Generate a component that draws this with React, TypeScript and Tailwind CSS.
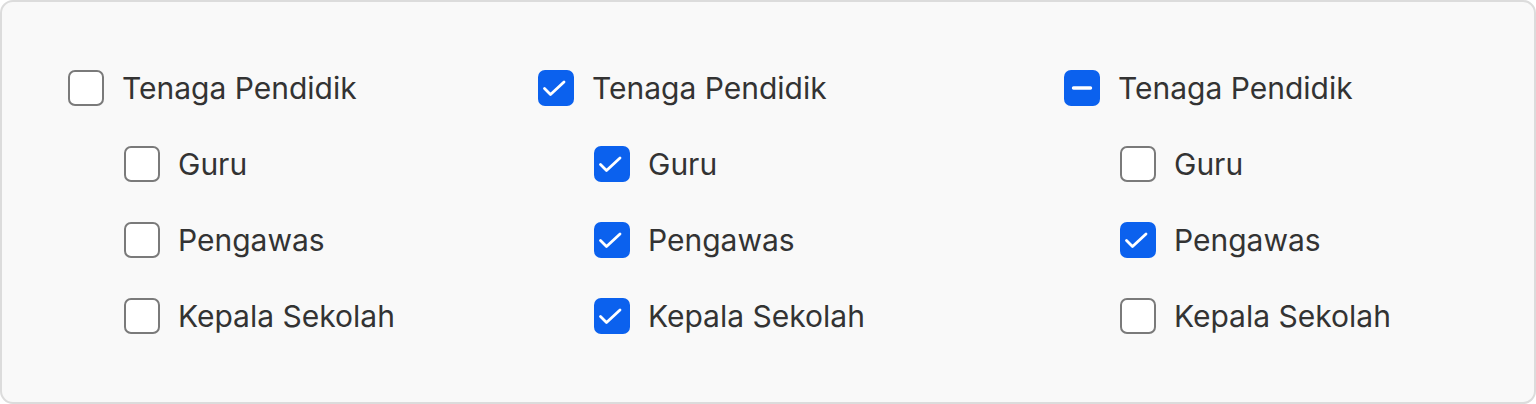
type State = "checked" | "unchecked" | "indeterminate";

interface Group {
  parent: State;
  children: State[];
  width: string;
}

const labels = ["Guru", "Pengawas", "Kepala Sekolah"];

const groups: Group[] = [
  { parent: "unchecked", children: ["unchecked", "unchecked", "unchecked"], width: "w-[470px]" },
  { parent: "checked", children: ["checked", "checked", "checked"], width: "w-[526px]" },
  { parent: "indeterminate", children: ["unchecked", "checked", "unchecked"], width: "w-[360px]" },
];

function Box({ state }: { state: State }) {
  if (state === "unchecked") {
    return <span className="block w-9 h-9 shrink-0 rounded-[7px] border-2 border-[#7a7a7a] bg-white" />;
  }
  return (
    <span className="flex w-9 h-9 shrink-0 rounded-[7px] bg-[#0b61ee] items-center justify-center">
      <svg width="36" height="36" viewBox="0 0 36 36" fill="none">
        {state === "checked" ? (
          <path
            d="M6.5 18.5L12.5 24.5L26 12"
            stroke="white"
            strokeWidth="2.8"
            strokeLinecap="round"
            strokeLinejoin="round"
          />
        ) : (
          <path d="M9.5 18H26.5" stroke="white" strokeWidth="3.4" strokeLinecap="round" />
        )}
      </svg>
    </span>
  );
}

function Row({ state, label }: { state: State; label: string }) {
  return (
    <label className="flex items-center gap-[18px] h-9">
      <Box state={state} />
      <span className="text-[30px] leading-none text-[#333333]">{label}</span>
    </label>
  );
}

export default function App() {
  return (
    <div className="w-[1536px] h-[404px] bg-white font-['Inter',sans-serif]">
      <div className="h-full rounded-[13px] border-2 border-[#dcdcdc] bg-[#f9f9f9] flex pl-[66px] pt-[68px]">
        {groups.map((g, i) => (
          <div key={i} className={`${g.width} flex flex-col gap-10`}>
            <Row state={g.parent} label="Tenaga Pendidik" />
            {g.children.map((c, j) => (
              <div key={j} className="pl-14">
                <Row state={c} label={labels[j]} />
              </div>
            ))}
          </div>
        ))}
      </div>
    </div>
  );
}
